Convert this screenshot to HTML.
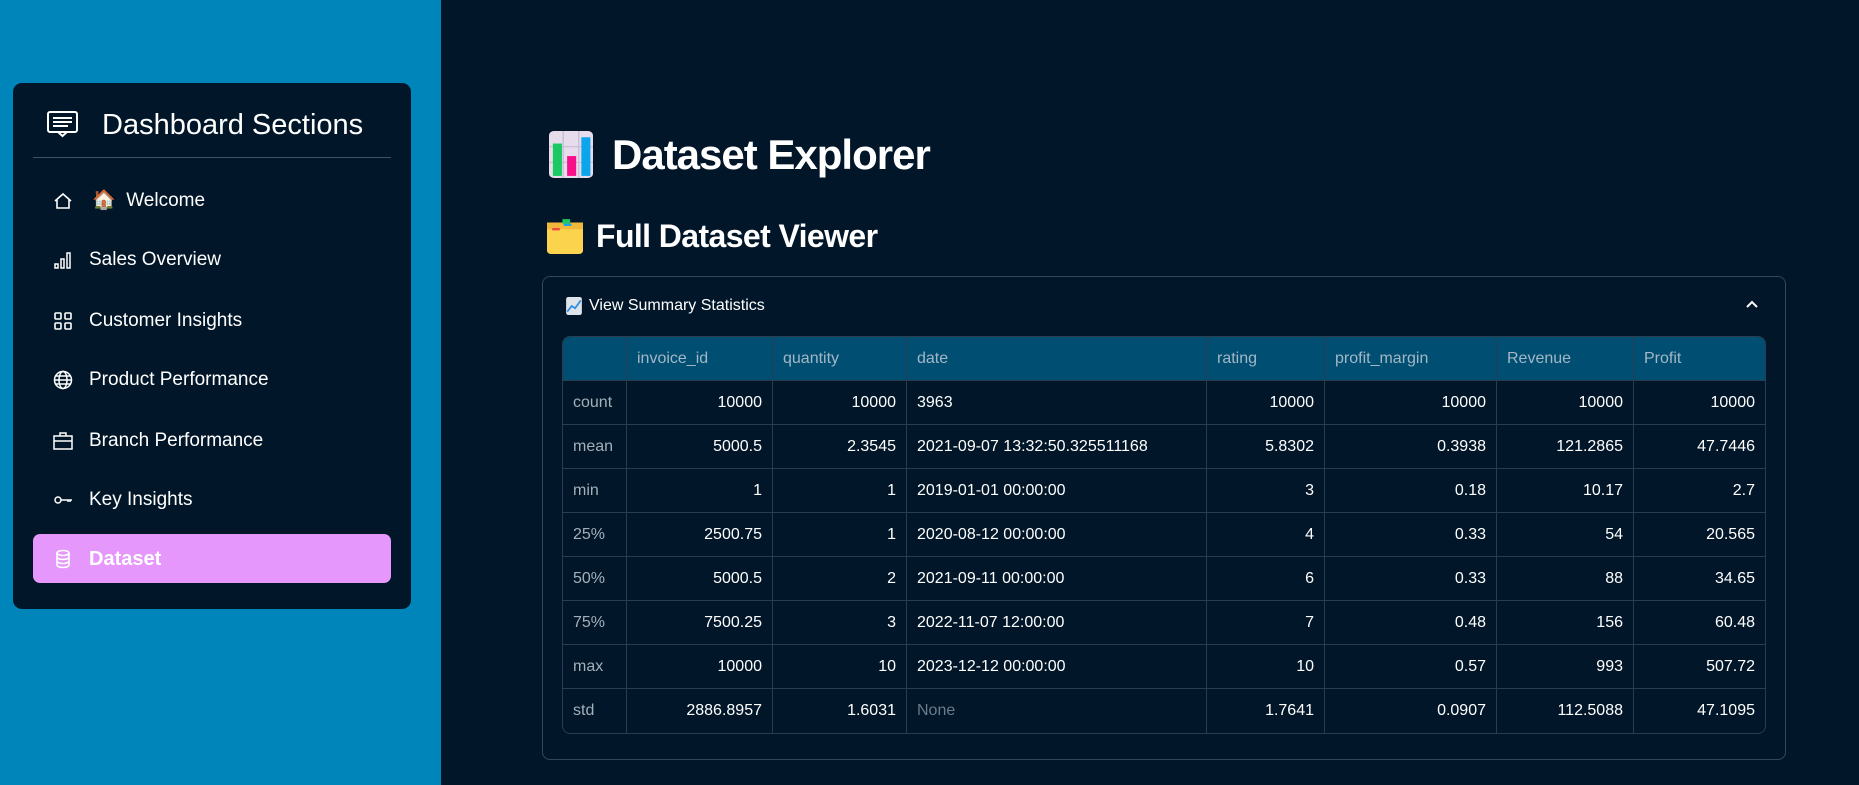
<!DOCTYPE html>
<html><head><meta charset="utf-8"><style>
*{box-sizing:border-box;margin:0;padding:0}
body{width:1859px;height:785px;overflow:hidden;background:#011628;font-family:"Liberation Sans",sans-serif;position:relative;color:#fff}
.side{position:absolute;left:0;top:0;width:441px;height:785px;background:#0085bb}
.card{position:absolute;left:13px;top:83px;width:398px;height:526px;background:#011628;border-radius:9px}
.ch{position:absolute;left:102px;top:108px;font-size:29px;line-height:34px;color:#fff}
.hr{position:absolute;left:33px;top:157px;width:358px;height:1px;background:#3d5266}
.it{position:absolute;left:89px;font-size:19px;line-height:22px;color:#fff}
.ic{position:absolute;left:53px;width:20px;height:20px}
.pill{position:absolute;left:33px;top:534px;width:358px;height:49px;background:#e597fb;border-radius:7px}
.h1{position:absolute;left:612px;top:129px;font-size:42px;line-height:52px;font-weight:bold;letter-spacing:-1px}
.h2{position:absolute;left:596px;top:217px;font-size:32px;line-height:38px;font-weight:bold;letter-spacing:-0.6px}
.exp{position:absolute;left:542px;top:276px;width:1244px;height:484px;border:1px solid #33475a;border-radius:8px}
.et{position:absolute;left:589px;top:297px;font-size:16px;line-height:18px;color:#fff}
table{position:absolute;left:562px;top:336px;width:1202px;table-layout:fixed;border-collapse:separate;border-spacing:0;font-size:16px;border:1px solid #2a3d50;border-radius:8px;overflow:hidden}
td,th{height:44px;border-right:1px solid #2a3d50;border-bottom:1px solid #2a3d50;padding:0 10px;font-weight:normal;white-space:nowrap;overflow:hidden}
th{background:#004e72;color:#a3b7c6;text-align:left;height:44px}
td{text-align:right;color:#fff}
td.l{text-align:left}td.ix{text-align:left;color:#a3b0bb}
tr:last-child td{border-bottom:none}
td:last-child,th:last-child{border-right:none}
</style></head><body>
<div class="side"><div class="card"></div>
<svg style="position:absolute;left:47px;top:110px" width="31" height="30" viewBox="0 0 31 30" fill="none" stroke="#fff" stroke-width="2"><rect x="1" y="2" width="29" height="20" rx="2"/><path d="M6 8h19M6 12h19M6 16h15M11 22l4.5 4 4.5-4"/></svg>
<div class="ch">Dashboard Sections</div><div class="hr"></div>
<svg class="ic" style="top:191px" viewBox="0 0 20 20" fill="none" stroke="#fff" stroke-width="1.6"><path d="M2 10L10 3l8 7M4 8v9h12V8"/></svg>
<div class="it" style="left:92px;top:190px">🏠&nbsp;&nbsp;Welcome</div>
<svg class="ic" style="top:250px" viewBox="0 0 20 20" fill="none" stroke="#fff" stroke-width="1.5"><rect x="2" y="14" width="3" height="4"/><rect x="8" y="9" width="3" height="9"/><rect x="14" y="3" width="3" height="15"/></svg>
<div class="it" style="top:249px">Sales Overview</div>
<svg class="ic" style="top:311px" viewBox="0 0 20 20" fill="none" stroke="#fff" stroke-width="1.6"><rect x="2" y="2" width="6" height="6" rx="1"/><rect x="12" y="2" width="6" height="6" rx="1"/><rect x="2" y="12" width="6" height="6" rx="1"/><rect x="12" y="12" width="6" height="6" rx="1"/></svg>
<div class="it" style="top:310px">Customer Insights</div>
<svg class="ic" style="top:370px" viewBox="0 0 20 20" fill="none" stroke="#fff" stroke-width="1.5"><circle cx="10" cy="10" r="8.5"/><ellipse cx="10" cy="10" rx="4" ry="8.5"/><path d="M1.5 10h17M3 6h14M3 14h14"/></svg>
<div class="it" style="top:369px">Product Performance</div>
<svg class="ic" style="top:431px" viewBox="0 0 20 20" fill="none" stroke="#fff" stroke-width="1.5"><rect x="1" y="5" width="18" height="13"/><path d="M7 5V2h6v3M1 10h18"/></svg>
<div class="it" style="top:430px">Branch Performance</div>
<svg class="ic" style="top:490px" viewBox="0 0 20 20" fill="none" stroke="#fff" stroke-width="1.5"><circle cx="5" cy="10" r="3"/><path d="M8 10h11M15 10v2M17 10v2"/></svg>
<div class="it" style="top:489px">Key Insights</div>
<div class="pill"></div>
<svg class="ic" style="top:549px" viewBox="0 0 20 20" fill="none" stroke="#fff" stroke-width="1.6"><ellipse cx="10" cy="4" rx="6" ry="2.5"/><path d="M4 4v12c0 1.4 2.7 2.5 6 2.5s6-1.1 6-2.5V4M4 8c0 1.4 2.7 2.5 6 2.5s6-1.1 6-2.5M4 12c0 1.4 2.7 2.5 6 2.5s6-1.1 6-2.5"/></svg>
<div class="it" style="top:548px;font-weight:bold;font-size:20px">Dataset</div>
</div>
<svg style="position:absolute;left:549px;top:131px" width="44" height="47" viewBox="0 0 34 45" preserveAspectRatio="none"><rect width="34" height="45" rx="4" fill="#e6dcec"/><path d="M0 15h34M0 30h34M11 0v45M23 0v45" stroke="#c7bcd2"/><rect x="3" y="12" width="7" height="31" fill="#18c964"/><rect x="14" y="24" width="7" height="19" fill="#f7108a"/><rect x="25" y="6" width="7" height="37" fill="#0ba5ec"/></svg>
<div class="h1">Dataset Explorer</div>
<svg style="position:absolute;left:547px;top:218px" width="36" height="36" viewBox="0 0 28 32" preserveAspectRatio="none"><rect y="4" width="28" height="28" rx="3" fill="#fcd34d"/><rect y="4" width="28" height="6" fill="#f3b73a"/><rect x="12" y="1" width="6" height="4" fill="#22c55e"/><rect x="13" y="5" width="6" height="2" fill="#0ea5e9"/><rect x="4" y="9" width="6" height="2" fill="#ef4444"/></svg>
<div class="h2">Full Dataset Viewer</div>
<div class="exp"></div>
<svg style="position:absolute;left:566px;top:297px" width="16" height="18" viewBox="0 0 14 16"><rect width="14" height="16" rx="2" fill="#dfe3ea"/><path d="M1 13l4-5 3 2 5-7" stroke="#2b8be0" stroke-width="1.5" fill="none"/></svg>
<div class="et">View Summary Statistics</div>
<svg style="position:absolute;left:1746px;top:300px" width="12" height="9" viewBox="0 0 12 9"><path d="M1 7l5-5 5 5" stroke="#fff" stroke-width="2" fill="none"/></svg>
<table>
<colgroup><col style="width:64px"><col style="width:146px"><col style="width:134px"><col style="width:300px"><col style="width:118px"><col style="width:172px"><col style="width:137px"><col style="width:131px"></colgroup>
<tr><th></th><th>invoice_id</th><th>quantity</th><th>date</th><th>rating</th><th>profit_margin</th><th>Revenue</th><th>Profit</th></tr>
<tr><td class="ix">count</td><td>10000</td><td>10000</td><td class="l">3963</td><td>10000</td><td>10000</td><td>10000</td><td>10000</td></tr>
<tr><td class="ix">mean</td><td>5000.5</td><td>2.3545</td><td class="l">2021-09-07 13:32:50.325511168</td><td>5.8302</td><td>0.3938</td><td>121.2865</td><td>47.7446</td></tr>
<tr><td class="ix">min</td><td>1</td><td>1</td><td class="l">2019-01-01 00:00:00</td><td>3</td><td>0.18</td><td>10.17</td><td>2.7</td></tr>
<tr><td class="ix">25%</td><td>2500.75</td><td>1</td><td class="l">2020-08-12 00:00:00</td><td>4</td><td>0.33</td><td>54</td><td>20.565</td></tr>
<tr><td class="ix">50%</td><td>5000.5</td><td>2</td><td class="l">2021-09-11 00:00:00</td><td>6</td><td>0.33</td><td>88</td><td>34.65</td></tr>
<tr><td class="ix">75%</td><td>7500.25</td><td>3</td><td class="l">2022-11-07 12:00:00</td><td>7</td><td>0.48</td><td>156</td><td>60.48</td></tr>
<tr><td class="ix">max</td><td>10000</td><td>10</td><td class="l">2023-12-12 00:00:00</td><td>10</td><td>0.57</td><td>993</td><td>507.72</td></tr>
<tr><td class="ix">std</td><td>2886.8957</td><td>1.6031</td><td class="l" style="color:#6b7b88">None</td><td>1.7641</td><td>0.0907</td><td>112.5088</td><td>47.1095</td></tr>
</table>
</body></html>
